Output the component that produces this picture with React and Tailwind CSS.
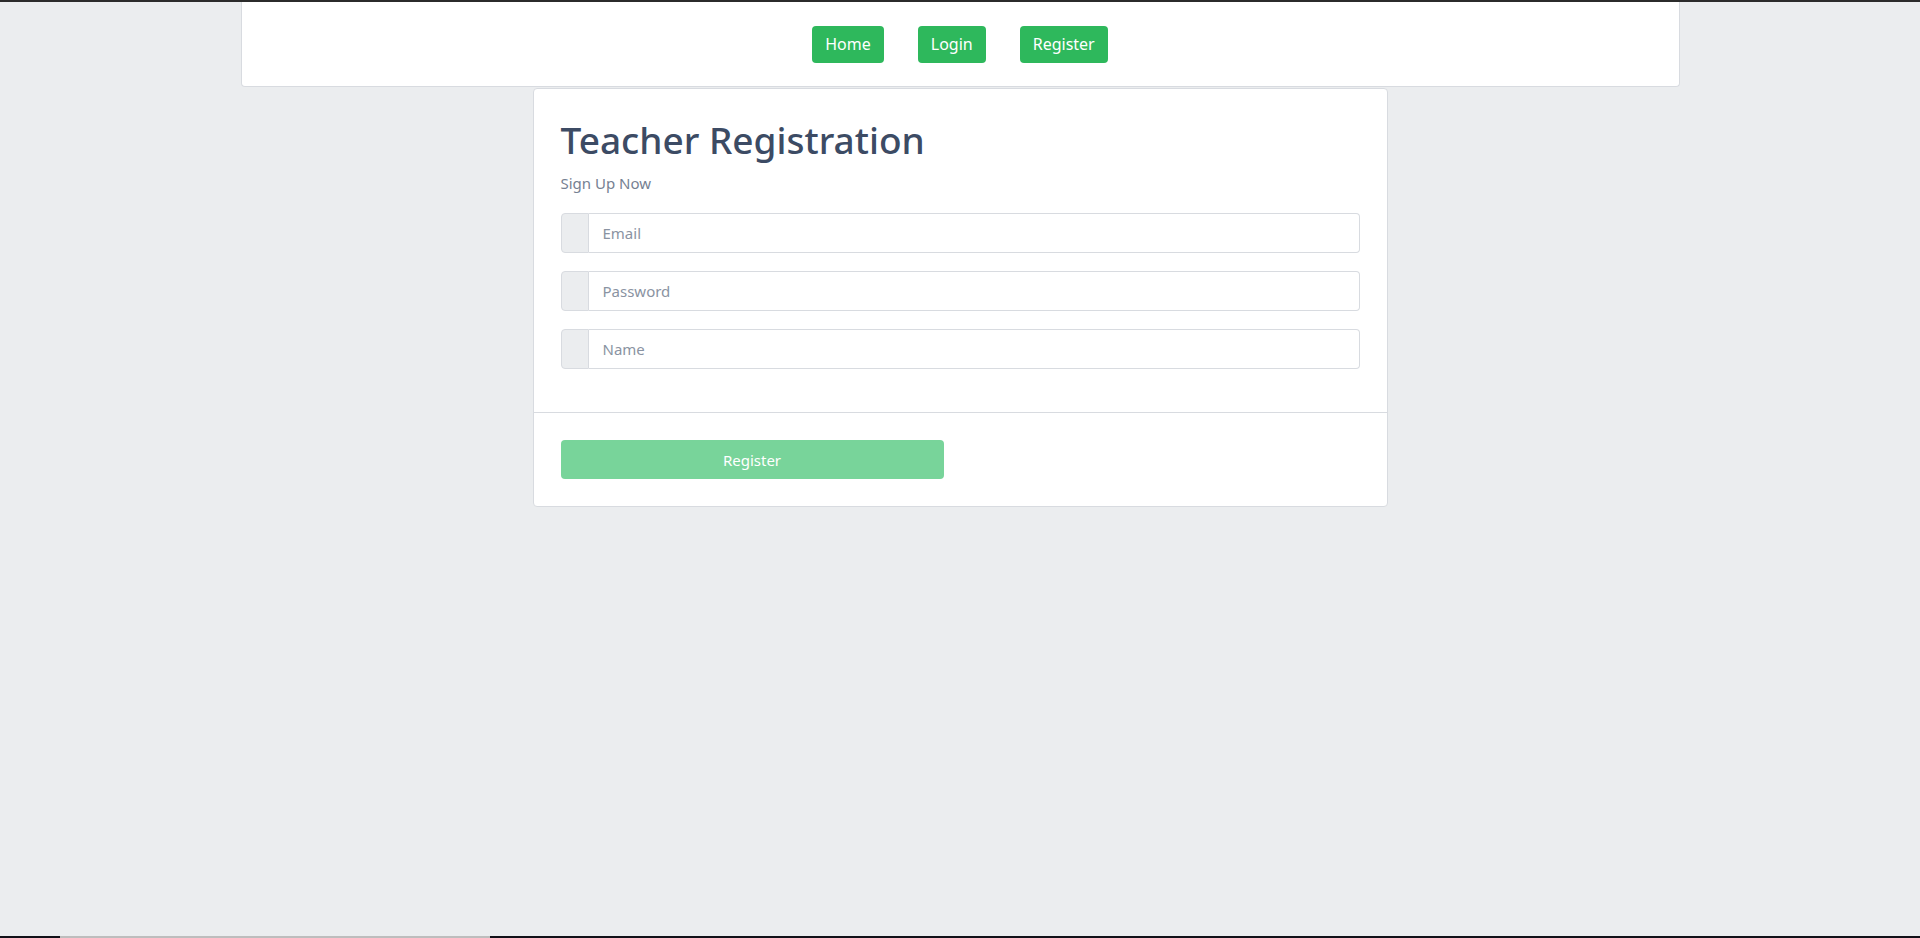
import React from "react";

const fields = [
  { id: "email", type: "email", placeholder: "Email" },
  { id: "password", type: "password", placeholder: "Password" },
  { id: "name", type: "text", placeholder: "Name" },
];

const navLinks = ["Home", "Login", "Register"];

export default function App() {
  return (
    <div
      className="min-h-screen flex flex-col bg-[#ebedef] text-[#3c4b64]"
      style={{ fontFamily: '"Noto Sans", "Open Sans", sans-serif' }}
    >
      {/* top chrome line */}
      <div className="h-[2px] bg-[#2b2b2b]" />

      <div className="flex-1 flex flex-col items-center">
        {/* Navbar */}
        <header className="w-[1439px] h-[85px] bg-white border border-t-0 border-[#d8dbe0] rounded-b-[4px] flex items-center justify-center gap-[34px]">
          {navLinks.map((label) => (
            <button
              key={label}
              className="h-[37px] px-[13px] rounded-[4px] bg-[#2eb85c] text-white text-[16px] leading-none"
            >
              {label}
            </button>
          ))}
        </header>

        {/* Registration card */}
        <div className="w-[855px] mt-[1px] bg-white border border-[#d8dbe0] rounded-[4px]">
          <div className="px-[27px] pt-[29px] pb-[43px]">
            <h1 className="text-[37px] leading-[1.2] font-medium text-[#3c4b64]">Teacher Registration</h1>
            <p className="mt-[10px] text-[15px] leading-[22px] text-[#768192]">Sign Up Now</p>

            <div className="mt-[19px] flex flex-col gap-[18px]">
              {fields.map((f) => (
                <div key={f.id} className="flex h-[40px]">
                  <span className="w-[28px] bg-[#ebedef] border border-[#d8dbe0] rounded-l-[4px]" />
                  <input
                    type={f.type}
                    placeholder={f.placeholder}
                    className="flex-1 border border-l-0 border-[#d8dbe0] rounded-r-[4px] px-[14px] text-[15px] text-[#3c4b64] placeholder:text-[#8a93a2] outline-none"
                  />
                </div>
              ))}
            </div>
          </div>

          <div className="border-t border-[#d8dbe0] px-[27px] pt-[27px] pb-[27px]">
            <button
              disabled
              className="w-[383px] h-[39px] rounded-[4px] bg-[#78d49a] text-white text-[15px]"
            >
              Register
            </button>
          </div>
        </div>
      </div>

      {/* bottom chrome line */}
      <div className="h-[2px] flex bg-[#111118]">
        <div className="w-[60px]" />
        <div className="w-[430px] bg-[#bdbdbd]" />
      </div>
    </div>
  );
}
